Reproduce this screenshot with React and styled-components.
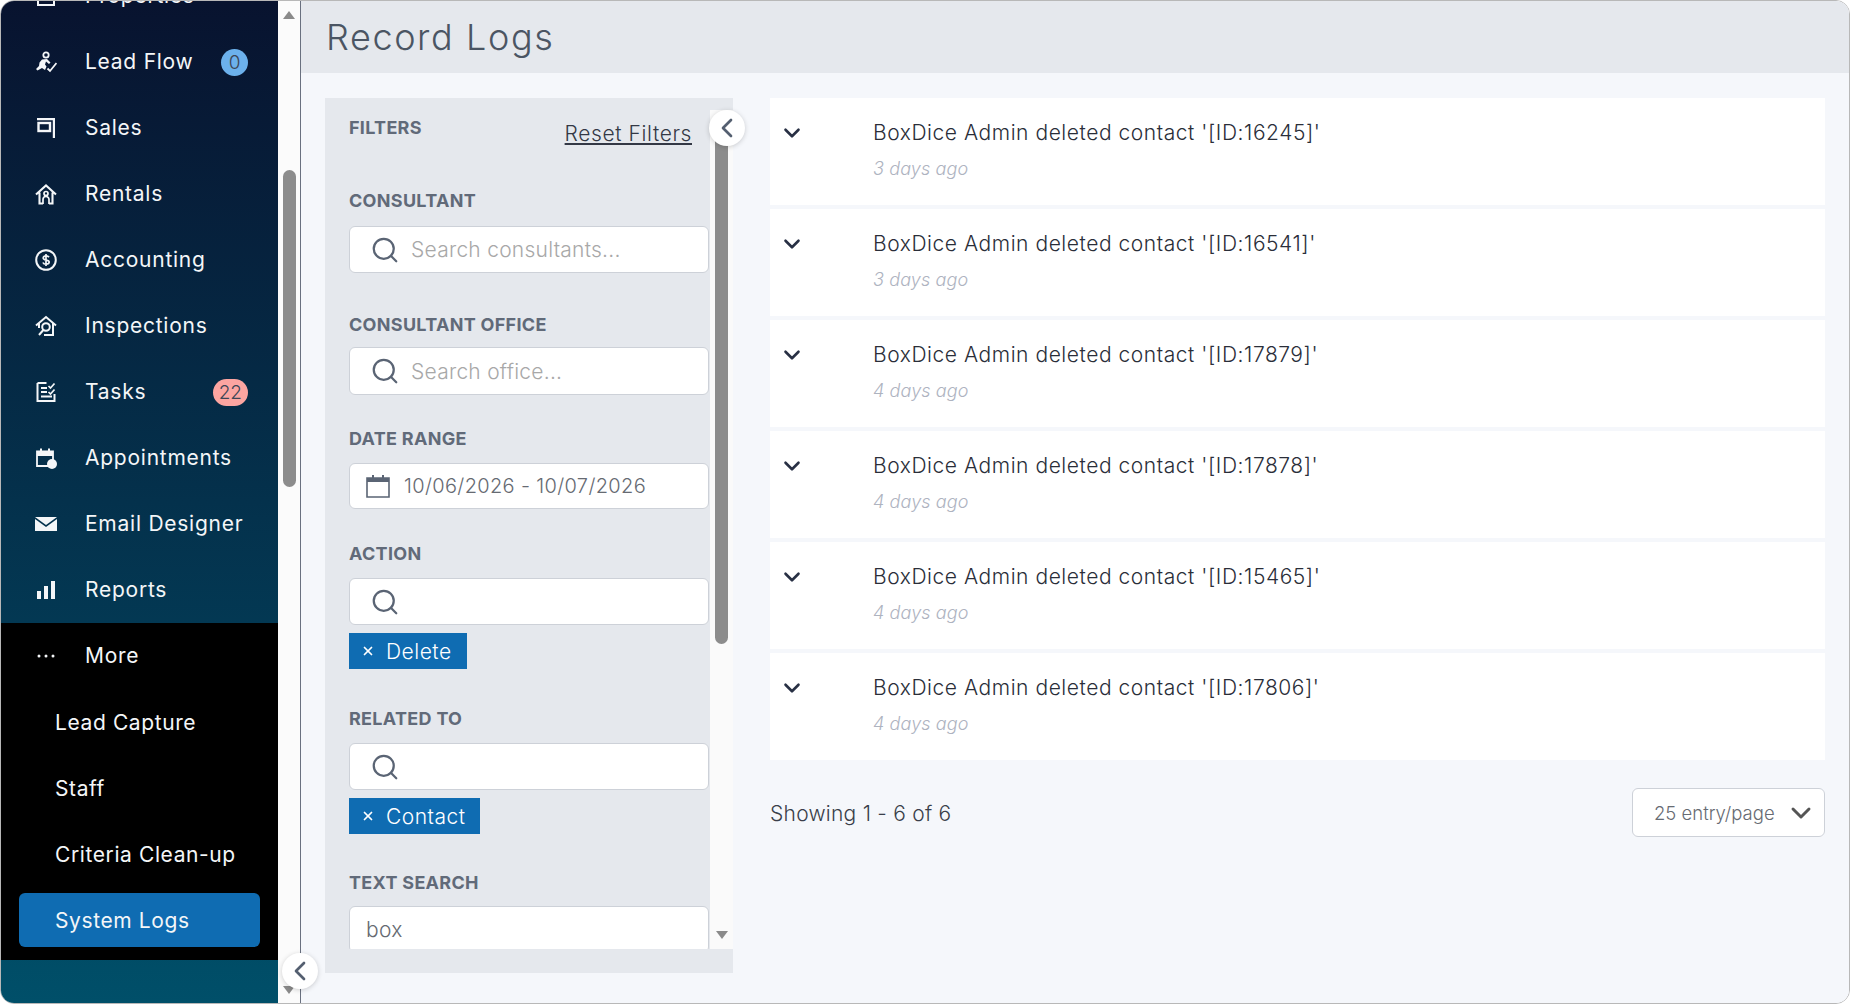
import React from 'react'
import styled, { createGlobalStyle } from 'styled-components'
import { Search, X, ChevronDown, ChevronLeft } from 'lucide-react'

const Font = `Inter, "Liberation Sans", sans-serif`

const GlobalStyle = createGlobalStyle`
  html, body {
    margin: 0;
    padding: 0;
    background: #ffffff;
    font-family: ${Font};
  }
  * {
    box-sizing: border-box;
  }
`

const Frame = styled.div`
  position: relative;
  display: flex;
  width: 1850px;
  height: 1004px;
  border: 1px solid #b8b8b8;
  border-radius: 14px;
  overflow: hidden;
`

const Sidebar = styled.nav`
  width: 277px;
  flex: none;
  overflow: hidden;
  background: linear-gradient(180deg, #08132f 0%, #004f69 100%);
`

const NavList = styled.div`
  margin-top: -38px;
`

const NavRow = styled.div`
  display: flex;
  align-items: center;
  height: 66px;
  padding: 0 30px 0 34px;
  color: #f4f6f8;
  font-size: 21px;
  letter-spacing: 0.75px;
`

const NavIcon = styled.span`
  display: flex;
  justify-content: center;
  width: 22px;
  margin-right: 28px;
`

const NavLabel = styled.span`
  flex: 1;
  padding-bottom: 2px;
`

const Badge = styled.span`
  display: flex;
  align-items: center;
  justify-content: center;
  min-width: 27px;
  height: 27px;
  padding: 0 6px;
  border-radius: 14px;
  background: ${(p) => p.$bg};
  color: #3d4656;
  font-size: 19px;
  font-weight: 300;
  letter-spacing: 0;
`

const MoreGroup = styled.div`
  height: 337px;
  background: #000000;
`

const SubRow = styled.div`
  display: flex;
  align-items: center;
  height: 66px;
  padding-left: 54px;
  color: #f4f6f8;
  font-size: 21px;
  letter-spacing: 0.6px;
`

const ActiveRow = styled(SubRow)`
  height: 54px;
  margin: 6px 18px 0;
  padding-left: 36px;
  border-radius: 6px;
  background: #0f6cb2;
`

const SideScroll = styled.div`
  display: flex;
  flex-direction: column;
  align-items: center;
  width: 22px;
  flex: none;
  background: #fbfbfb;
`

const Arrow = styled.span`
  width: 0;
  height: 0;
  border-left: 6px solid transparent;
  border-right: 6px solid transparent;
  ${(p) => (p.$down ? 'border-top' : 'border-bottom')}: 8px solid #8a8a8a;
`

const SideThumb = styled.div`
  width: 13px;
  height: 317px;
  margin-top: 151px;
  border-radius: 7px;
  background: #8c8c8c;
`

const SideArrowDown = styled(Arrow)`
  margin-top: auto;
  margin-bottom: 9px;
`

const SideArrowUp = styled(Arrow)`
  margin-top: 10px;
`

const Main = styled.main`
  display: flex;
  flex-direction: column;
  flex: 1;
  min-width: 0;
  border-left: 1px solid #69707f;
  background: #f5f7fb;
`

const Header = styled.header`
  display: flex;
  align-items: center;
  height: 72px;
  padding-left: 25px;
  background: #e5e8ed;
  color: #4b5563;
  font-size: 36px;
  font-weight: 300;
  letter-spacing: 1.6px;
`

const Body = styled.div`
  display: flex;
  gap: 37px;
  padding: 25px 24px 0 24px;
`

const FilterPanel = styled.aside`
  display: flex;
  width: 408px;
  height: 875px;
  flex: none;
  padding-bottom: 24px;
  background: #e5e8ed;
`

const FilterScroll = styled.div`
  width: 385px;
  flex: none;
  overflow: hidden;
  padding: 20px 0 0 24px;
`

const FilterHead = styled.div`
  display: flex;
  justify-content: space-between;
  align-items: flex-start;
  padding-right: 18px;
`

const HeadLabel = styled.div`
  color: #616a79;
  font-size: 18px;
  line-height: 20px;
  font-weight: 700;
  letter-spacing: 0.3px;
`

const ResetLink = styled.a`
  margin-top: 4px;
  color: #333845;
  font-size: 21px;
  line-height: 24px;
  font-weight: 300;
  letter-spacing: 0.6px;
  text-decoration: underline;
`

const Field = styled.div`
  margin-top: ${(p) => p.$top}px;
`

const FieldLabel = styled.div`
  margin-bottom: ${(p) => p.$gap}px;
  color: #616a79;
  font-size: 18px;
  line-height: 20px;
  font-weight: 700;
  letter-spacing: 0.3px;
`

const InputBox = styled.div`
  display: flex;
  align-items: center;
  width: 360px;
  height: ${(p) => p.$h || 47}px;
  padding-left: 20px;
  border: 1px solid #cdd1d8;
  border-radius: 6px;
  background: #ffffff;
  color: #666a72;
  font-size: 21px;
  font-weight: 300;
  letter-spacing: 0.25px;
`

const SearchIcon = styled(Search)`
  flex: none;
  margin-right: 11px;
  color: #5a6474;
`

const Placeholder = styled.span`
  color: #a8a8a8;
`

const DateGlyph = styled.span`
  display: flex;
  margin-left: -4px;
`

const DateText = styled.span`
  margin-left: 14px;
  font-size: 20px;
  letter-spacing: 0.35px;
`

const TextValue = styled.span`
  margin-left: -4px;
  letter-spacing: 0.3px;
`

const Chip = styled.div`
  display: flex;
  align-items: center;
  width: ${(p) => p.$w}px;
  height: 36px;
  margin-top: 8px;
  padding-left: 12px;
  background: #0f6cb2;
  color: #ffffff;
  font-size: 21px;
  font-weight: 300;
  letter-spacing: 0.5px;
`

const ChipX = styled(X)`
  margin-right: 11px;
`

const FilterTrack = styled.div`
  display: flex;
  flex-direction: column;
  align-items: center;
  width: 23px;
  flex: none;
  margin-top: 12px;
  background: #fafafa;
`

const FilterThumb = styled.div`
  width: 13px;
  height: 512px;
  margin-top: 22px;
  border-radius: 0 0 7px 7px;
  background: #8c8c8c;
`

const FilterArrow = styled(Arrow)`
  margin-top: auto;
  margin-bottom: 10px;
`

const Collapse = styled.button`
  position: absolute;
  top: ${(p) => p.$top}px;
  left: ${(p) => p.$left}px;
  display: flex;
  align-items: center;
  justify-content: center;
  width: 36px;
  height: 36px;
  padding: 0;
  border: none;
  border-radius: 50%;
  background: #ffffff;
  box-shadow: 0 1px 5px rgba(0, 0, 0, 0.18);
  color: #545f70;
`

const LogColumn = styled.section`
  flex: 1;
  min-width: 0;
`

const LogList = styled.div`
  display: flex;
  flex-direction: column;
  gap: 4px;
`

const LogRow = styled.article`
  display: flex;
  height: 107px;
  padding: 21px 0 0 9px;
  background: #ffffff;
`

const RowChevron = styled(ChevronDown)`
  flex: none;
  margin: 1px 68px 0 0;
  color: #283044;
`

const LogTitle = styled.div`
  color: #2a2e39;
  font-size: 21px;
  line-height: 28px;
  font-weight: 300;
  letter-spacing: 0.55px;
`

const LogTime = styled.div`
  margin-top: 8px;
  color: #aeb3bf;
  font-size: 18px;
  line-height: 28px;
  font-style: italic;
  font-weight: 300;
  letter-spacing: 0.1px;
`

const Footer = styled.div`
  display: flex;
  justify-content: space-between;
  align-items: center;
  margin-top: 28px;
`

const Showing = styled.div`
  padding-top: 2px;
  color: #3a3f4a;
  font-size: 21px;
  font-weight: 300;
  letter-spacing: 0.25px;
`

const PageSelect = styled.div`
  display: flex;
  align-items: center;
  justify-content: space-between;
  width: 193px;
  height: 49px;
  padding: 0 7px 0 21px;
  border: 1px solid #cdd1d8;
  border-radius: 6px;
  background: #ffffff;
  color: #676b73;
  font-size: 18.5px;
  font-weight: 300;
`

const SelectChevron = styled(ChevronDown)`
  color: #555555;
`

// sidebar glyphs, drawn to follow the reference strokes
const LeadFlowIcon = () => (
  <svg width="22" height="22" viewBox="0 0 22 22" fill="#f4f6f8">
    <circle cx="11" cy="4" r="2.7" fill="none" stroke="#f4f6f8" strokeWidth="1.8" />
    <path d="M7 8.5 12 8l3.5 3.5-1.500 1.500-3-2.500-1 3 1.500 2-1.500 3.500-3-2-4.500 2.500L1 18l3-3 .5-3.500z" />
    <path d="M12.500 17.500l2.500 2.500 6.500-8" fill="none" stroke="#f4f6f8" strokeWidth="1.800" />
  </svg>
)

const SalesIcon = () => (
  <svg width="22" height="22" viewBox="0 0 22 22">
    <path d="M2 1h18v20h-2.200V3.200H2z" fill="#f4f6f8" />
    <rect x="3.500" y="6" width="11.500" height="8" fill="none" stroke="#f4f6f8" strokeWidth="2.400" />
  </svg>
)

const RentalsIcon = () => (
  <svg width="22" height="22" viewBox="0 0 22 22" fill="none" stroke="#f4f6f8" strokeWidth="2.100">
    <path d="M1 11.500 11 2.500l10 9M4.500 9.500V20.500H8M17.500 9.500V20.500H14" />
    <path d="M8 21v-4.500a3 3 0 0 1 6 0V21" strokeWidth="1.700" />
    <circle cx="11" cy="10.500" r="2" strokeWidth="1.700" />
  </svg>
)

const AccountingIcon = () => (
  <svg width="22" height="22" viewBox="0 0 22 22" fill="none">
    <circle cx="11" cy="11" r="9.800" stroke="#f4f6f8" strokeWidth="2" />
    <path
      d="M14 8.200c-.6-1-1.600-1.400-3-1.400-1.600 0-2.800.8-2.800 2.100 0 3 6 1.400 6 4.200 0 1.300-1.300 2.100-3.100 2.100-1.500 0-2.700-.6-3.200-1.700M11 5v12"
      stroke="#f4f6f8"
      strokeWidth="1.700"
    />
  </svg>
)

const InspectionsIcon = () => (
  <svg width="22" height="22" viewBox="0 0 22 22" fill="none" stroke="#f4f6f8" strokeWidth="2">
    <path d="M1 10.500 11 2l10 8.500M4 8.500V13M18 8.500V20H9" />
    <circle cx="11" cy="12" r="3.800" />
    <path d="M8.300 15 4 20" />
  </svg>
)

const TasksIcon = () => (
  <svg width="22" height="22" viewBox="0 0 22 22" fill="none" stroke="#f4f6f8" strokeWidth="2">
    <path d="M2.500 2h9M2.500 2v18h17v-7" />
    <path d="M6 7h6M6 11h6M6 15.500h11" />
    <path d="M13.500 5l2 2 4-4.500M13.500 11l2 2 4-4.500" strokeWidth="1.700" />
  </svg>
)

const AppointmentsIcon = () => (
  <svg width="22" height="22" viewBox="0 0 22 22" fill="none">
    <path d="M2 4.500h16V19H2z" stroke="#f4f6f8" strokeWidth="1.800" />
    <path d="M2 5h16v4H2zM5 1.500h2v4H5zM13 1.500h2v4h-2z" fill="#f4f6f8" />
    <circle cx="17" cy="17" r="5" fill="#f4f6f8" />
  </svg>
)

const EmailIcon = () => (
  <svg width="22" height="22" viewBox="0 0 22 22">
    <path d="M0 4h22l-11 8zM0 6l11 8 11-8v12H0z" fill="#f4f6f8" />
  </svg>
)

const ReportsIcon = () => (
  <svg width="22" height="22" viewBox="0 0 22 22" fill="#f4f6f8">
    <rect x="2" y="12" width="4" height="8" />
    <rect x="9" y="7" width="4" height="13" />
    <rect x="16" y="2" width="4" height="18" />
  </svg>
)

const MoreIcon = () => (
  <svg width="22" height="22" viewBox="0 0 22 22" fill="#f4f6f8">
    <circle cx="4" cy="11" r="1.500" />
    <circle cx="11" cy="11" r="1.500" />
    <circle cx="18" cy="11" r="1.500" />
  </svg>
)

const PropertiesIcon = () => (
  <svg width="22" height="22" viewBox="0 0 22 22" fill="none" stroke="#f4f6f8" strokeWidth="2">
    <path d="M3 20V4h16v16z" />
    <path d="M7 8h3M12 8h3M7 12h3M12 12h3" />
  </svg>
)

const CalendarIcon = () => (
  <svg width="24" height="24" viewBox="0 0 24 24" fill="none">
    <path d="M1 4h22v19H1z" stroke="#5a6474" strokeWidth="1.600" />
    <path d="M1 4h22v4H1z" fill="#5a6474" />
    <path d="M6 1h2v5H6zM16 1h2v5h-2z" fill="#5a6474" />
  </svg>
)

const navItems = [
  { label: 'Properties', icon: <PropertiesIcon /> },
  { label: 'Lead Flow', icon: <LeadFlowIcon />, badge: '0', badgeBg: '#6cb1ec' },
  { label: 'Sales', icon: <SalesIcon /> },
  { label: 'Rentals', icon: <RentalsIcon /> },
  { label: 'Accounting', icon: <AccountingIcon /> },
  { label: 'Inspections', icon: <InspectionsIcon /> },
  { label: 'Tasks', icon: <TasksIcon />, badge: '22', badgeBg: '#fca5a1' },
  { label: 'Appointments', icon: <AppointmentsIcon /> },
  { label: 'Email Designer', icon: <EmailIcon /> },
  { label: 'Reports', icon: <ReportsIcon /> },
]

const logs = [
  { id: '16245', time: '3 days ago' },
  { id: '16541', time: '3 days ago' },
  { id: '17879', time: '4 days ago' },
  { id: '17878', time: '4 days ago' },
  { id: '15465', time: '4 days ago' },
  { id: '17806', time: '4 days ago' },
]

export default function App() {
  return (
    <>
      <GlobalStyle />
      <Frame>
        <Sidebar>
          <NavList>
            {navItems.map((item) => (
              <NavRow key={item.label}>
                <NavIcon>{item.icon}</NavIcon>
                <NavLabel>{item.label}</NavLabel>
                {item.badge && <Badge $bg={item.badgeBg}>{item.badge}</Badge>}
              </NavRow>
            ))}
            <MoreGroup>
              <NavRow>
                <NavIcon>
                  <MoreIcon />
                </NavIcon>
                <NavLabel>More</NavLabel>
              </NavRow>
              <SubRow>Lead Capture</SubRow>
              <SubRow>Staff</SubRow>
              <SubRow>Criteria Clean-up</SubRow>
              <ActiveRow>System Logs</ActiveRow>
            </MoreGroup>
          </NavList>
        </Sidebar>
        <SideScroll>
          <SideArrowUp />
          <SideThumb />
          <SideArrowDown $down />
        </SideScroll>
        <Main>
          <Header>Record Logs</Header>
          <Body>
            <FilterPanel>
              <FilterScroll>
                <FilterHead>
                  <HeadLabel>FILTERS</HeadLabel>
                  <ResetLink>Reset Filters</ResetLink>
                </FilterHead>
                <Field $top={45}>
                  <FieldLabel $gap={15}>CONSULTANT</FieldLabel>
                  <InputBox>
                    <SearchIcon size={30} strokeWidth={1.8} />
                    <Placeholder>Search consultants...</Placeholder>
                  </InputBox>
                </Field>
                <Field $top={42}>
                  <FieldLabel $gap={12}>CONSULTANT OFFICE</FieldLabel>
                  <InputBox $h={48}>
                    <SearchIcon size={30} strokeWidth={1.8} />
                    <Placeholder>Search office...</Placeholder>
                  </InputBox>
                </Field>
                <Field $top={34}>
                  <FieldLabel $gap={14}>DATE RANGE</FieldLabel>
                  <InputBox $h={46}>
                    <DateGlyph>
                      <CalendarIcon />
                    </DateGlyph>
                    <DateText>10/06/2026 - 10/07/2026</DateText>
                  </InputBox>
                </Field>
                <Field $top={35}>
                  <FieldLabel $gap={14}>ACTION</FieldLabel>
                  <InputBox $h={47}>
                    <SearchIcon size={30} strokeWidth={1.8} />
                  </InputBox>
                  <Chip $w={118}>
                    <ChipX size={14} strokeWidth={3} />
                    Delete
                  </Chip>
                </Field>
                <Field $top={40}>
                  <FieldLabel $gap={14}>RELATED TO</FieldLabel>
                  <InputBox $h={47}>
                    <SearchIcon size={30} strokeWidth={1.8} />
                  </InputBox>
                  <Chip $w={131}>
                    <ChipX size={14} strokeWidth={3} />
                    Contact
                  </Chip>
                </Field>
                <Field $top={39}>
                  <FieldLabel $gap={13}>TEXT SEARCH</FieldLabel>
                  <InputBox $h={47}>
                    <TextValue>box</TextValue>
                  </InputBox>
                </Field>
              </FilterScroll>
              <FilterTrack>
                <FilterThumb />
                <FilterArrow $down />
              </FilterTrack>
            </FilterPanel>
            <LogColumn>
              <LogList>
                {logs.map((log) => (
                  <LogRow key={log.id}>
                    <RowChevron size={26} strokeWidth={2.4} />
                    <div>
                      <LogTitle>BoxDice Admin deleted contact '[ID:{log.id}]'</LogTitle>
                      <LogTime>{log.time}</LogTime>
                    </div>
                  </LogRow>
                ))}
              </LogList>
              <Footer>
                <Showing>Showing 1 - 6 of 6</Showing>
                <PageSelect>
                  25 entry/page
                  <SelectChevron size={32} strokeWidth={2.2} />
                </PageSelect>
              </Footer>
            </LogColumn>
          </Body>
        </Main>
        <Collapse $top={109} $left={708}>
          <ChevronLeft size={32} strokeWidth={2} />
        </Collapse>
        <Collapse $top={952} $left={281}>
          <ChevronLeft size={32} strokeWidth={2} />
        </Collapse>
      </Frame>
    </>
  )
}
